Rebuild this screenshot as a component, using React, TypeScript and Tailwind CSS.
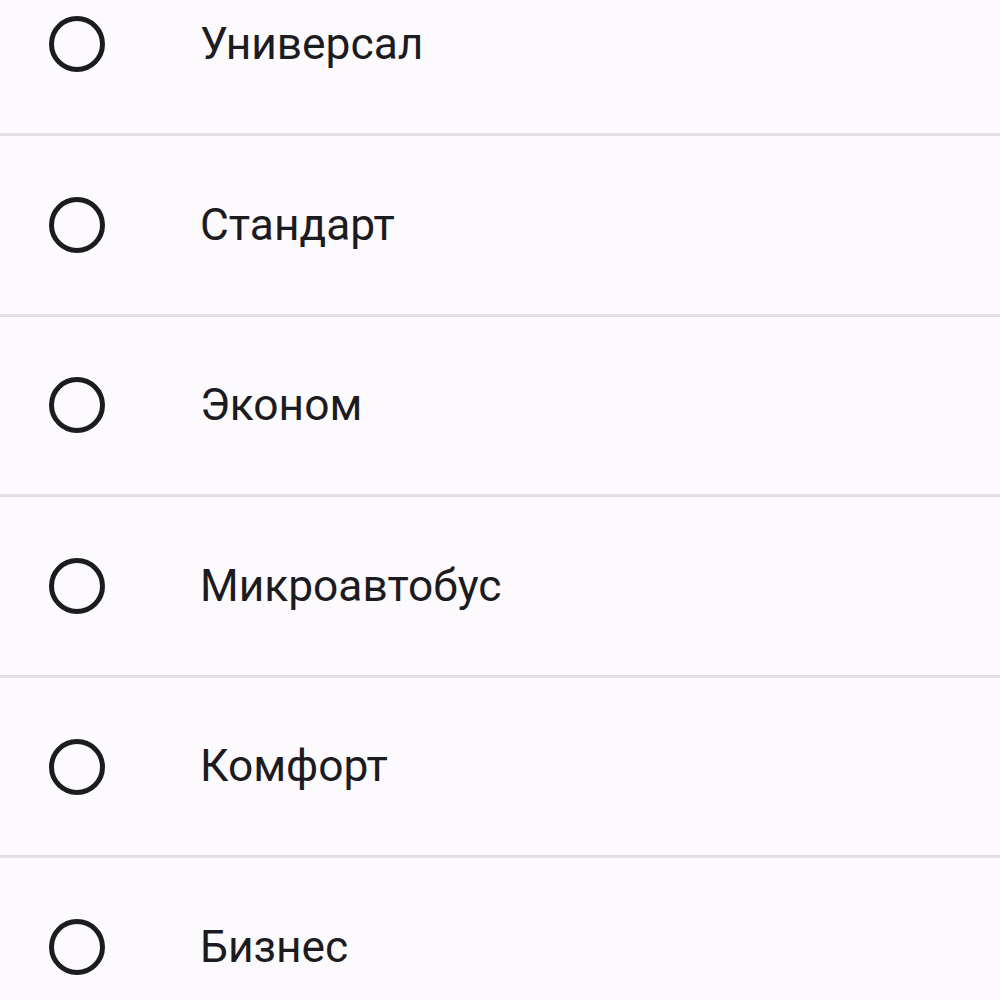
import React from "react";

const items = ["Универсал", "Стандарт", "Эконом", "Микроавтобус", "Комфорт", "Бизнес"];

export default function App() {
  return (
    <div className="w-[1000px] h-[1000px] overflow-hidden bg-[#fcfafc]" style={{ fontFamily: 'Roboto, "Noto Sans", sans-serif' }}>
      <div className="-mt-[44.6px] flex flex-col">
        {items.map((t) => (
          <div key={t} className="box-border h-[180.6px] flex items-center border-b-[3px] border-[#e1dfe3] pl-[49px]">
            <div className="w-[56px] h-[56px] rounded-full border-[5px] border-[#1c1b1f] shrink-0" />
            <span className="ml-[95px] text-[44.3px] leading-none text-[#1c1b1f]">{t}</span>
          </div>
        ))}
      </div>
    </div>
  );
}
